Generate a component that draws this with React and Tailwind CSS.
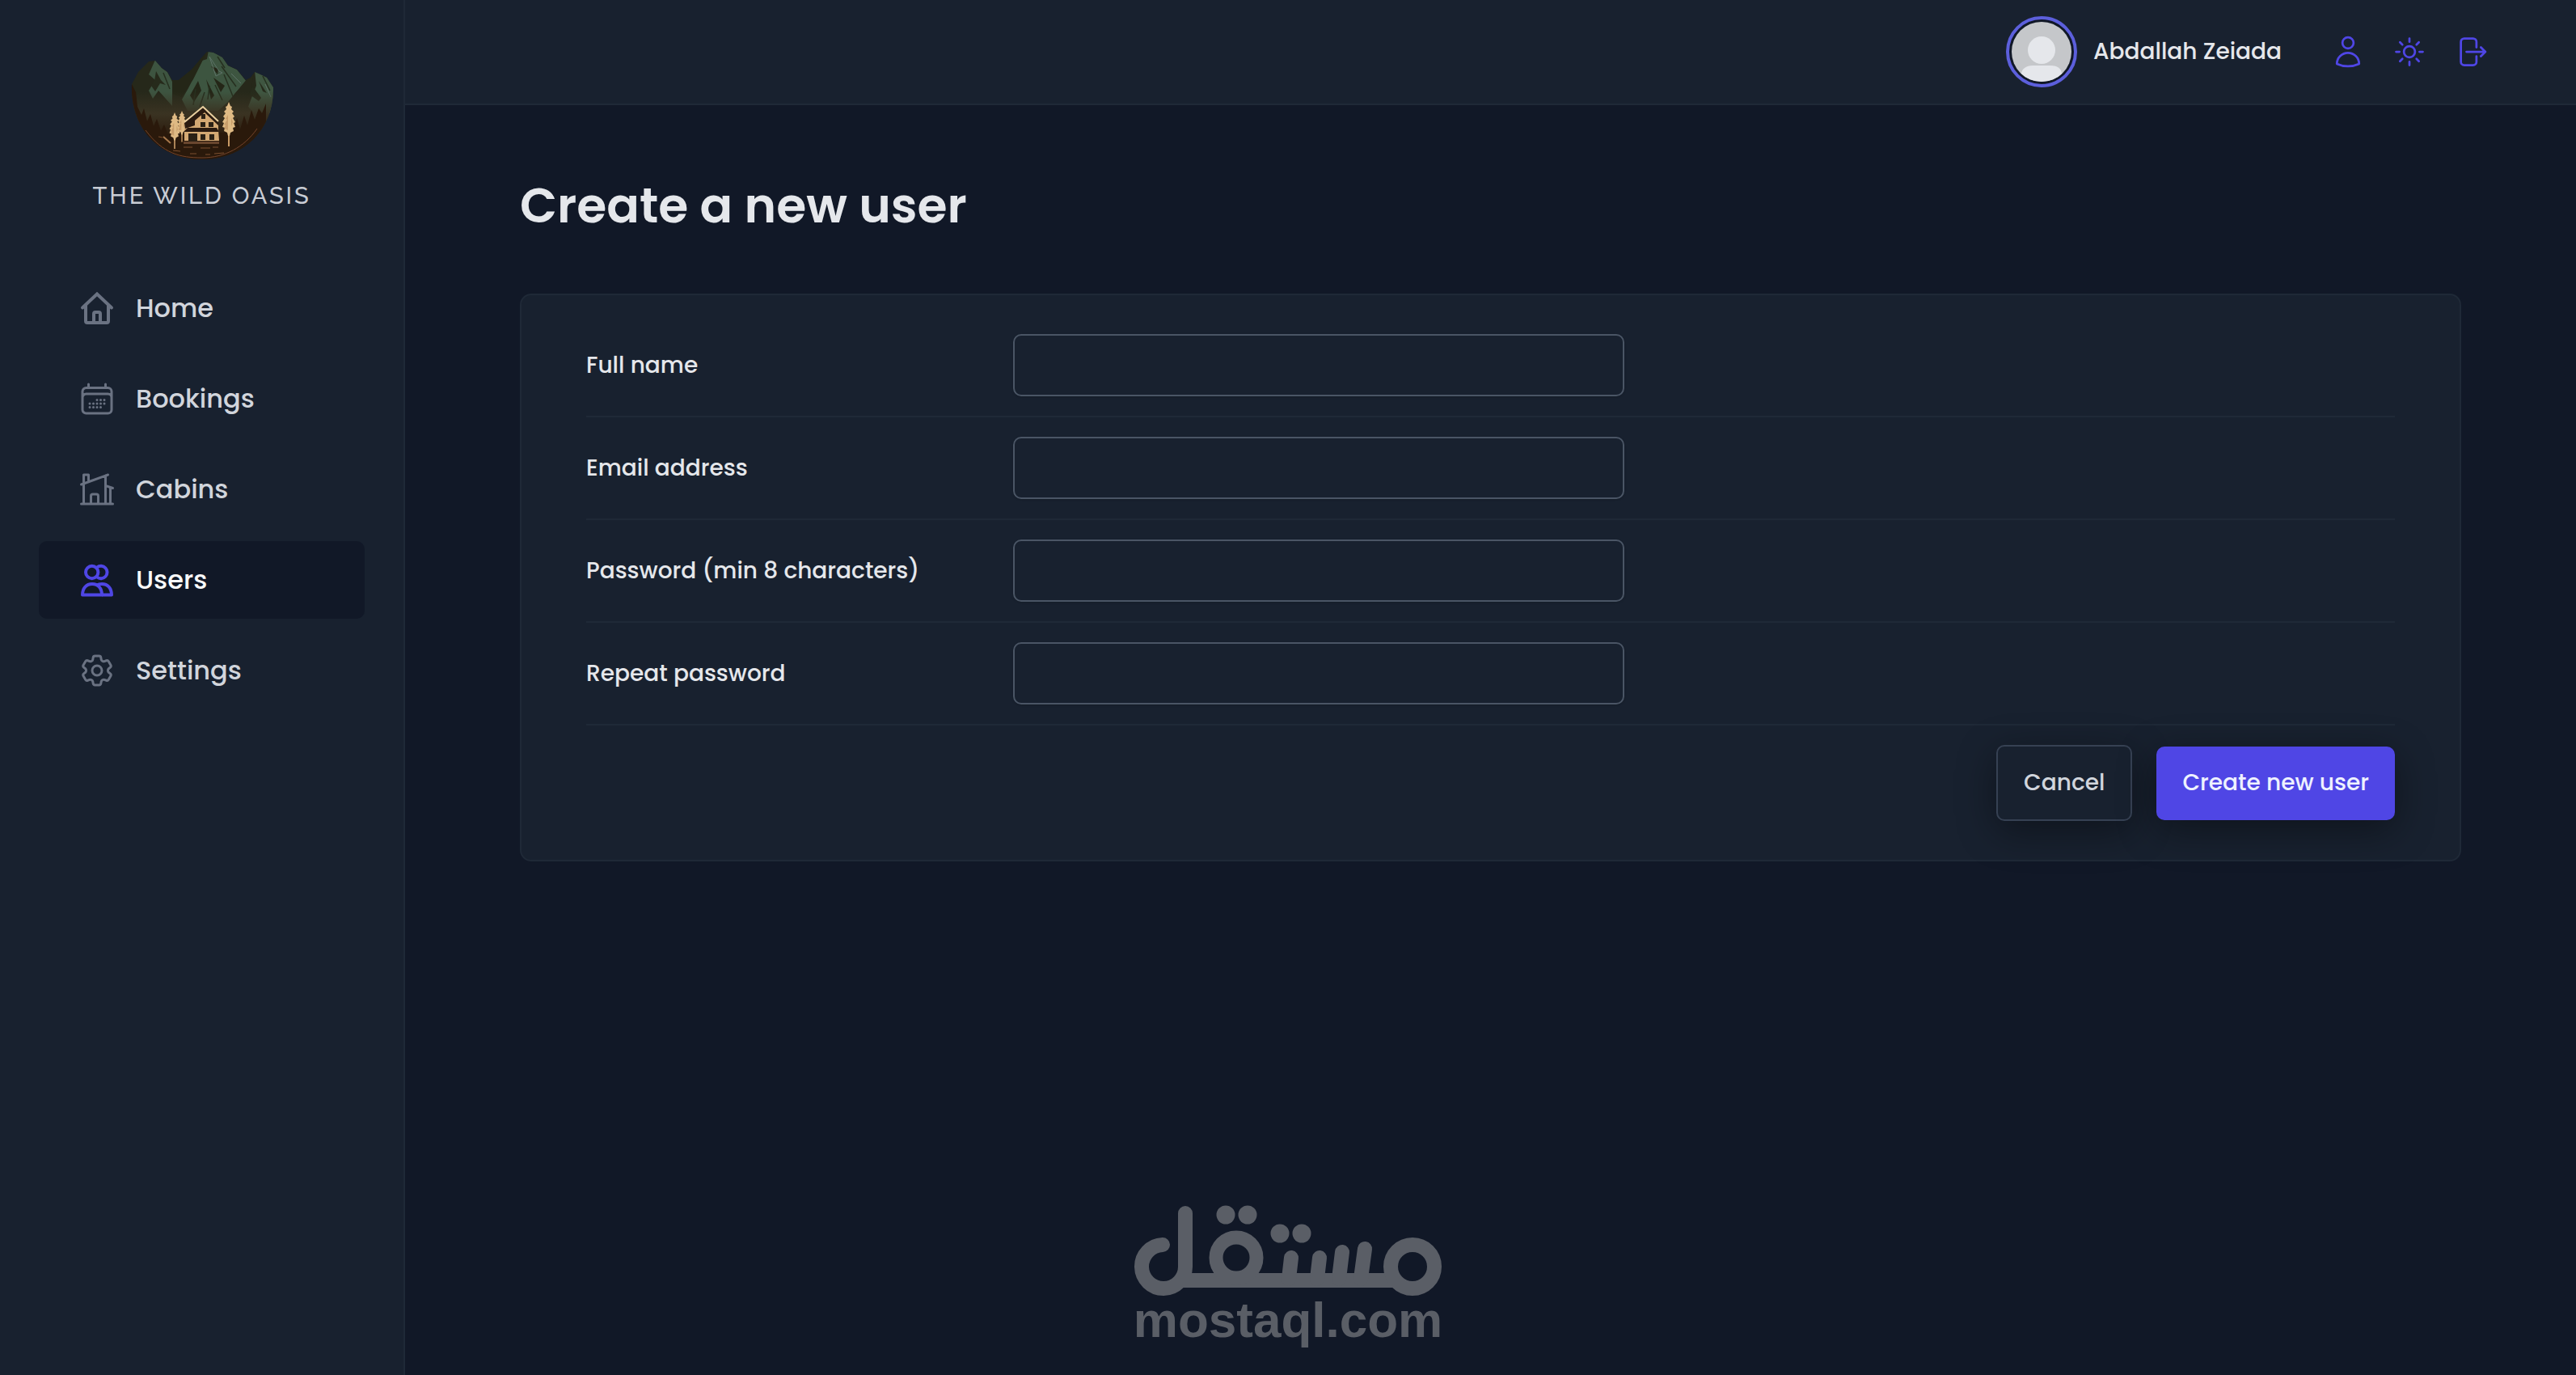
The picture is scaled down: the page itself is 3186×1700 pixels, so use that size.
import React from 'react';
import {
    HiOutlineCalendarDays,
    HiOutlineHomeModern,
    HiOutlineCog6Tooth,
    HiOutlineUser,
    HiOutlineSun,
    HiArrowRightOnRectangle,
} from 'react-icons/hi2';

function HomeIcon({ className }) {
    return (
        <svg className={className} viewBox="0 0 48 48" fill="none" stroke="currentColor" strokeWidth="4">
            <path d="M6 23.500L24 6.500l18 17" strokeLinecap="round" />
            <path d="M10 20v20a2 2 0 0 0 2 2h24a2 2 0 0 0 2-2V20" />
            <path d="M20 42V31a2 2 0 0 1 2-2h4a2 2 0 0 1 2 2v11" />
        </svg>
    );
}

function UsersIcon({ className }) {
    return (
        <svg className={className} viewBox="0 0 48 48" fill="none" stroke="currentColor" strokeWidth="4" strokeLinejoin="round">
            <circle cx="17.700" cy="14.500" r="7.700" />
            <path d="M24 8.500a7.700 7.700 0 1 1 0 12" />
            <path d="M6 42.500c0-8 4.500-13.500 12-13.500s12 5.500 12 13.500z" />
            <path d="M24 30.500c1.500-1 3.500-1.500 6-1.500 7.500 0 12 5.500 12 13.500H30" />
        </svg>
    );
}

const links = [
    { label: 'Home', icon: HomeIcon },
    { label: 'Bookings', icon: HiOutlineCalendarDays },
    { label: 'Cabins', icon: HiOutlineHomeModern },
    { label: 'Users', icon: UsersIcon, active: true },
    { label: 'Settings', icon: HiOutlineCog6Tooth },
];

const fields = [
    { id: 'fullName', label: 'Full name', type: 'text' },
    { id: 'email', label: 'Email address', type: 'email' },
    { id: 'password', label: 'Password (min 8 characters)', type: 'password' },
    { id: 'passwordConfirm', label: 'Repeat password', type: 'password' },
];

// crown is drawn in a 16x40 box centred on x = 0
function Pine({ x, y, scale = 1 }) {
    return (
        <g transform={`translate(${x} ${y}) scale(${scale})`}>
            <path d="M0 30v25" stroke="#c99b66" strokeWidth="2" />
            <path
                d="M0 0l2 5 2 1-1 3 3 3-2 2 3 4-2 2 3 5-2 1 2 5-3 1 1 4-4 2-1 4h-2l-1-4-4-2 1-4-3-1 2-5-2-1 3-5-2-2 3-4-2-2 3-3-1-3 2-1z"
                fill="#dfba84"
            />
            <path d="M-1 16l-3 5 2 1-4 6 2 1-2 4 5 2zM3 20l2 5-2 5z" fill="#b98a58" opacity=".6" />
        </g>
    );
}

function Logo() {
    return (
        <div className="flex flex-col items-center">
            <svg className="h-[136px] w-[176px]" viewBox="0 0 176 136" aria-hidden="true">
                <defs>
                    <clipPath id="bowl">
                        <path d="M1 42L9 27 22 14 30 13 38 22 45 27 51 37 59 37 75 24 86 11 94 2 102 3 113 9 120 19 131 24 142 37 148 34 153 27 160 30 168 34 176 46C177 98 139 135 88 135S-1 98 1 42z" />
                    </clipPath>
                    <linearGradient id="haze" x1="0" y1="0" x2="0" y2="1">
                        <stop offset=".38" stopColor="#3a3322" stopOpacity="0" />
                        <stop offset=".58" stopColor="#3a3322" />
                        <stop offset=".78" stopColor="#2c1b0d" />
                    </linearGradient>
                </defs>
                <g clipPath="url(#bowl)">
                    <rect width="176" height="136" fill="#26281a" />
                    <path d="M30 12l8 10 7 5 6 12v30L34 50 27 60 22 50 30 37 22 30z" fill="#3d5440" />
                    <path d="M96 0l17 8 7 11 11 5 12 15-14 14-10 15-9 7H70l-7-14 8-14 9-18 8-16 6-2z" fill="#3d5540" />
                    <path d="M153 25l8 2 9 7 7 12v30l-20 8-12-14 6-16 4-10z" fill="#3f5641" />
                    <path d="M94 1L88 14 77 36 62 58 52 54 51 37 76 22zM102 34l14 10-5 8zM83 38l4 12-9 14-5-8zM93 36l10 20-4 5zM99 20l8 10 1-7z" fill="#242617" />
                    <path d="M31 26l6 11 6 6-7-2-6 10-5-7 4-6zM150 44l11 15-3 4-11-8zM158 38l10 15-5-2z" fill="#262a1b" />
                    <path d="M107 8l9 14M112 20l18 25M104 43l9 19M80 48l-3 20M91 52l-6 18M163 32l9 18M40 28l8 20M115 30l11 27M97 44l-2 17" stroke="#26301f" strokeWidth="1.500" fill="none" />
                    <path d="M97 8l12 18 4 2-8 4zM124 29l12 12M166 42l7 16" fill="none" stroke="#5d7267" strokeWidth="1" />
                    <path d="M100 82l20-18 24-29 8-8-3 20-8 16 14 25z" fill="#26281a" />
                    <rect width="176" height="136" fill="url(#haze)" />
                    <path d="M0 40l6 12 2 18 5 10 3-8 4 16 4-9 4 15 4-9 5 15 4-8 5 13 6-9 5 14 8-6 50-2 6-10 5 9 5-17 4 14 5-17 4 12 5-19 4 12 5-14 4 6 5-12v80H0z" fill="#2a190b" />
                    <path d="M18 99c22 29 42 34 70 34s52-13 68-36" fill="none" stroke="#75452c" strokeWidth="1" />
                    <path d="M40 107l9 8" stroke="#a8794c" strokeWidth="2" />
                    <path d="M34 107l5 1M52 124l9 1M73 128h8M65 120h11M86 121h12M101 120h7M103 128l12-1M92 129h6" stroke="#7d5030" strokeWidth="1" />
                </g>
                <Pine x={54} y={77} scale={0.82} />
                <Pine x={63} y={75} scale={0.7} />
                <Pine x={121} y={64} />
                <path d="M67 90L89 72l19 17v9l1 14H66V100z" fill="#d4a973" />
                <path d="M66 90L89 70l19 18v5L91 77 79 87v6l-12 4z" fill="#2b1b10" />
                <path d="M66 89L89 70l19 18" fill="none" stroke="#ead0a0" strokeWidth="2" />
                <path d="M70 96h36l3 5H65z" fill="#2b1b10" />
                <path d="M87 79h5v6h-5zM86 89h6v6h-6zM96 89h6v6h-6zM71 103h11v10H71zM86 104h6v7h-6zM97 104h6v7h-6z" fill="#2b2115" />
                <path d="M65 113h44v3H65z" fill="#69462e" />
            </svg>
            <p className="mt-6 font-['Raleway','Lato',sans-serif] text-[29px] leading-10 font-medium tracking-widest text-[#c8ccd4]">
                THE WILD OASIS
            </p>
        </div>
    );
}

function Sidebar() {
    return (
        <aside className="row-span-2 border-r-2 border-[#1f2937] bg-[#18212f] px-12 pt-[62px]">
            <Logo />
            <nav className="mt-[71px]">
                <ul className="flex flex-col gap-4">
                    {links.map(({ label, icon: Icon, active }) => (
                        <li key={label}>
                            <a
                                href="#"
                                className={`flex h-24 items-center gap-6 rounded-[10px] px-12 text-[32px] font-medium ${
                                    active ? 'bg-[#111827] text-gray-50' : 'text-gray-300'
                                }`}
                            >
                                <Icon className={`size-12 ${active ? 'text-[#4f46e5]' : 'text-gray-500'}`} />
                                {label}
                            </a>
                        </li>
                    ))}
                </ul>
            </nav>
        </aside>
    );
}

function Header() {
    return (
        <header className="flex items-center justify-end gap-12 border-b-2 border-[#1f2937] bg-[#18212f] px-24">
            <div className="flex items-center gap-5 text-[28px] font-medium text-gray-200">
                <svg className="size-[88px]" viewBox="0 0 88 88" role="img" aria-label="Avatar">
                    <clipPath id="face">
                        <circle cx="44" cy="44" r="37" />
                    </clipPath>
                    <circle cx="44" cy="44" r="42" fill="#111827" stroke="#5c5fdc" strokeWidth="4" />
                    <g clipPath="url(#face)">
                        <path fill="#c5c7ca" d="M0 0h88v88H0z" />
                        <circle cx="44" cy="42" r="17" fill="#e5e7eb" />
                        <path d="M19 88V72c0-7 6-11 14-11h22c8 0 14 4 14 11v16z" fill="#e5e7eb" />
                    </g>
                </svg>
                <span>Abdallah Zeiada</span>
            </div>
            <div className="flex gap-2 text-[#4f46e5]">
                <button className="p-3" aria-label="Account">
                    <HiOutlineUser className="size-11" />
                </button>
                <button className="p-3" aria-label="Toggle theme">
                    <HiOutlineSun className="size-11" />
                </button>
                <button className="p-3" aria-label="Log out">
                    <HiArrowRightOnRectangle className="size-11" />
                </button>
            </div>
        </header>
    );
}

function SignupForm() {
    return (
        <form className="rounded-[14px] border-2 border-[#1f2937] bg-[#18212f] px-20 py-6">
            {fields.map(({ id, label, type }) => (
                <div key={id} className="flex items-center border-b-2 border-[#1f2937] py-6">
                    <label htmlFor={id} className="w-[528px] text-[28px] font-medium text-gray-200">
                        {label}
                    </label>
                    <input
                        id={id}
                        type={type}
                        className="h-[77px] w-[756px] rounded-[10px] border-2 border-gray-600 bg-[#18212f] px-6 text-[28px] shadow-sm"
                    />
                </div>
            ))}
            <div className="flex items-center justify-end gap-[30px] py-6 text-[28px] font-medium">
                <button type="reset" className="h-[94px] rounded-[10px] border-2 border-gray-700 bg-[#18212f] px-8 text-gray-300 shadow-[0_12px_48px_rgba(0,0,0,0.4)]">
                    Cancel
                </button>
                <button className="h-[91px] rounded-[10px] bg-[#4f46e5] px-8 text-indigo-50 shadow-[0_12px_48px_rgba(0,0,0,0.4)]">
                    Create new user
                </button>
            </div>
        </form>
    );
}

function Watermark() {
    return (
        <div className="pointer-events-none fixed inset-x-0 bottom-[38px] flex flex-col items-center text-[#5a5e66]">
            <svg className="h-[112px] w-[382px]" viewBox="0 0 382 112" fill="none" stroke="currentColor" strokeWidth="18" strokeLinecap="round">
                <path d="M36 49A27 27 0 1 0 64 76V10M60 93H322" />
                <circle cx="127" cy="65" r="25" strokeWidth="17" />
                <circle cx="345" cy="76" r="27" />
                <path d="M195 65l-3 26M230 65l-3 26M258 58l-4 33M286 54l-5 37" />
                <g fill="currentColor" stroke="none">
                    <circle cx="114" cy="12" r="11.500" />
                    <circle cx="141" cy="12" r="11.500" />
                    <circle cx="181" cy="35" r="11.500" />
                    <circle cx="208" cy="35" r="11.500" />
                </g>
            </svg>
            <p className="font-['Liberation_Sans',sans-serif] text-[62px] leading-[60px] font-bold">mostaql.com</p>
        </div>
    );
}

export default function App() {
    return (
        <div className="grid min-h-screen grid-cols-[501px_1fr] grid-rows-[130px_1fr] bg-[#111827] font-['Poppins','Inter',sans-serif]">
            <Sidebar />
            <Header />
            <main className="px-[142px] py-[79px]">
                <h1 className="mb-16 text-[60px] leading-[90px] font-semibold text-gray-200">Create a new user</h1>
                <SignupForm />
            </main>
            <Watermark />
        </div>
    );
}
